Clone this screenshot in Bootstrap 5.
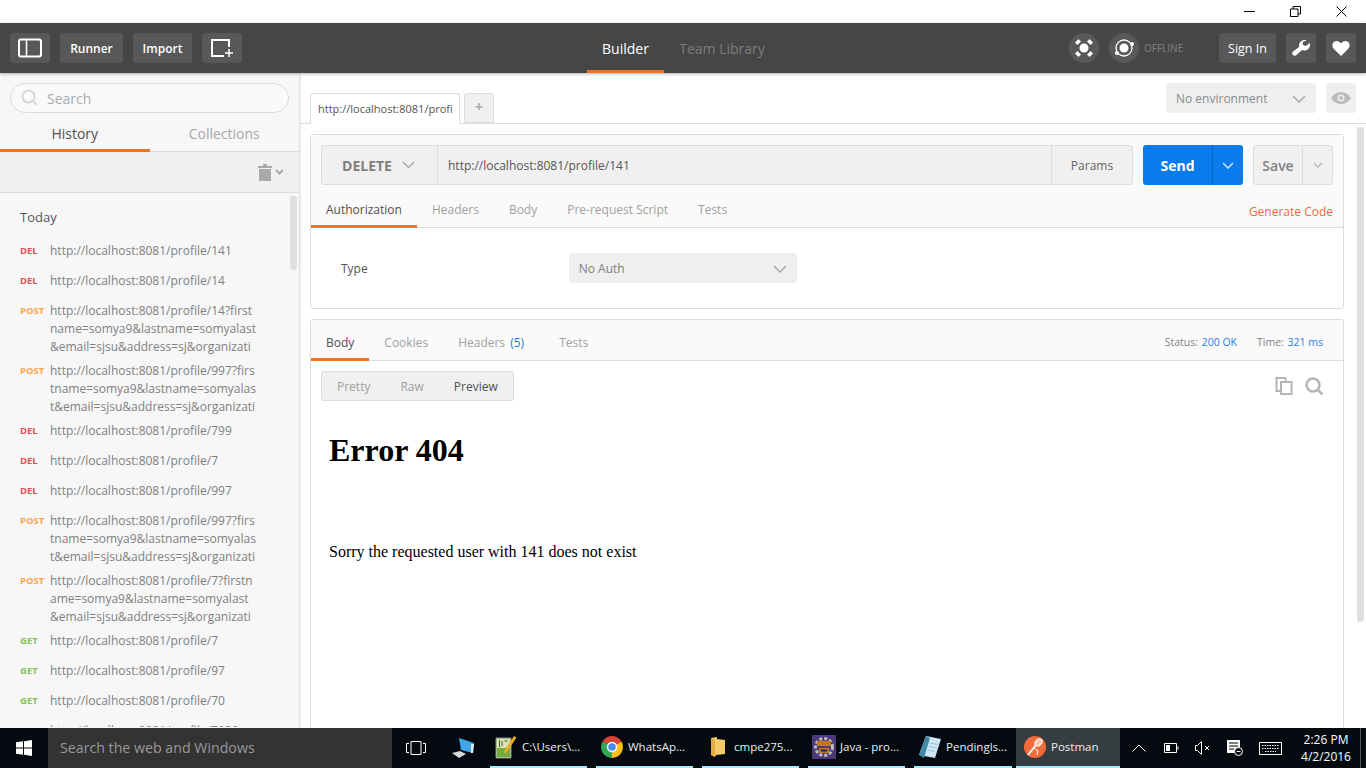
<!DOCTYPE html>
<html lang="en">

<head>
    <meta charset="UTF-8">
    <meta name="viewport" content="width=device-width, initial-scale=1.0">
    <title>Postman</title>
    <link href="https://cdn.jsdelivr.net/npm/bootstrap@5.3.2/dist/css/bootstrap.min.css" rel="stylesheet">
    <style>
        html, body { height: 100%; overflow: hidden; }
        body { font-family: "Open Sans", sans-serif; font-size: 12px; color: #555; background: #fff; }
        .app-shell { height: 768px; width: 1366px; overflow: hidden; }

        .title-strip { height: 23px; background: #fff; padding-right: 2px; }
        .win-btn { width: 46px; height: 23px; display: flex; align-items: center; justify-content: center; }

        .top-bar { height: 50px; background: #464646; padding: 10px; position: relative; z-index: 5; box-shadow: 0 1px 3px rgba(0,0,0,.3); }
        .top-btn { height: 30px; background: #585858; border-radius: 3px; color: #fff; font-weight: 600; font-size: 12px; display: flex; align-items: center; justify-content: center; }
        .top-txt { padding-top: 2px; }
        .btn-sq-lg { width: 40px; }
        .btn-sq { width: 30px; margin-left: 10px; }
        .btn-runner { width: 63px; }
        .btn-import { width: 59px; }
        .btn-sign { width: 57px; font-weight: 400; font-size: 12.5px; }
        .top-left { width: 560px; gap: 10px; }
        .top-center { margin-left: 17px; }
        .top-tab { width: 77px; height: 50px; margin-top: -10px; margin-bottom: -10px; padding-top: 3px; display: flex; align-items: center; justify-content: center; font-size: 14px; color: #fff; border-bottom: 3px solid transparent; }
        .top-tab.on { border-bottom-color: #f47023; }
        .top-tab.off { color: #7c7c7c; width: 116px; }
        .top-right { margin-left: auto; }
        .round-btn { width: 30px; height: 30px; border-radius: 50%; background: #585858; display: flex; align-items: center; justify-content: center; }
        .round-btn + .round-btn { margin-left: 10px; }
        .offline-txt { font-size: 10px; color: #808080; margin: 0 34px 0 5px; width: 41px; white-space: nowrap; }

        .body-row { height: 655px; overflow: hidden; }
        .side-col { width: 300px; flex: none; background: #f7f7f7; border-right: 1px solid #e0e0e0; box-shadow: 1px 0 2px rgba(0,0,0,.08); }
        .search-wrap { height: 56px; padding: 10px 10px 0 10px; }
        .search-pill { height: 30px; border: 1px solid #dcdcdc; border-radius: 15px; background: #fafafa; padding-left: 10px; gap: 8px; font-size: 14px; color: #aaa; }
        .side-tabs { border-bottom: 1px solid #dcdcdc; margin-top: -4px; height: 27px; }
        .side-tab { width: 150px; text-align: center; font-size: 14px; color: #a8a8a8; height: 27px; line-height: 18px; }
        .side-tab.on { color: #505050; border-bottom: 3px solid #f47023; }
        .trash-row { height: 41px; background: #f0f0f0; border-bottom: 1px solid #dcdcdc; padding-right: 15px; gap: 3px; }
        .hist-scroll { height: 534px; overflow: hidden; position: relative; padding: 15px 0 0 20px; }
        .hist-scroll::after { content: ""; position: absolute; right: 2px; top: 3px; width: 7px; height: 74px; background: #e0e0e0; border-radius: 3px; }
        .today-lbl { font-size: 13px; color: #555; height: 18px; line-height: 18px; margin-bottom: 16px; }
        .hist-row { display: flex; min-height: 24px; margin-bottom: 6px; }
        .hist-verb { width: 30px; flex: none; font-size: 9.5px; font-weight: 700; line-height: 18px; }
        .v-del { color: #e0505a; }
        .v-post { color: #f7a64a; }
        .v-get { color: #86c15c; }
        .hist-url { width: 210px; font-size: 12px; line-height: 18px; color: #808080; white-space: nowrap; }

        .main-col { width: 1066px; position: relative; }
        .tab-strip { height: 51px; border-bottom: 1px solid #dcdcdc; padding: 20px 0 0 10px; position: relative; }
        .req-tab { width: 150px; height: 31px; background: #fff; border: 1px solid #dcdcdc; border-bottom: 0; border-radius: 3px 3px 0 0; font-size: 11px; color: #555; padding: 7px 0 0 7px; overflow: hidden; white-space: nowrap; margin-bottom: -1px; position: relative; }
        .add-tab { width: 30px; height: 30px; background: #f0f0f0; border: 1px solid #dcdcdc; border-radius: 3px 3px 0 0; margin-left: 4px; color: #aaa; font-size: 14px; text-align: center; line-height: 26px; font-weight: 700; }
        .env-box { position: absolute; left: 866px; top: 10px; width: 150px; height: 30px; background: #efefef; border-radius: 3px; font-size: 12px; color: #8a8a8a; padding: 2px 10px 0; }
        .eye-box { position: absolute; left: 1026px; top: 10px; width: 30px; height: 30px; background: #efefef; border-radius: 3px; }

        .panel-box { width: 1034px; margin-left: 10px; border: 1px solid #dcdcdc; border-radius: 3px; background: #fff; }
        .req-panel { height: 175px; margin-top: 10px; }
        .url-row { padding: 10px 10px 0; gap: 10px; height: 50px; background: #fafafa; }
        .url-group { width: 812px; height: 40px; background: #f0f0f0; border: 1px solid #dcdcdc; border-radius: 3px; }
        .verb-box { width: 116px; border-right: 1px solid #dcdcdc; font-size: 14px; font-weight: 700; color: #808080; gap: 10px; padding-right: 2px; }
        .url-box { flex: 1; padding: 2px 0 0 10px; font-size: 12px; color: #555; }
        .params-box { width: 81px; border-left: 1px solid #dcdcdc; justify-content: center; color: #666; font-size: 12px; padding-top: 2px; }
        .send-btn { width: 100px; height: 40px; background: #097bed; border-radius: 3px; color: #fff; font-weight: 700; font-size: 14px; }
        .send-main { width: 70px; border-right: 1px solid #0a65c0; height: 100%; }
        .save-btn { width: 80px; height: 40px; background: #f0f0f0; border: 1px solid #dcdcdc; border-radius: 3px; color: #808080; font-weight: 600; font-size: 14px; }
        .save-main { width: 49px; border-right: 1px solid #dcdcdc; height: 100%; }
        .sub-tabs { height: 43px; background: #fafafa; border-bottom: 1px solid #dcdcdc; position: relative; }
        .sub-tab { height: 33px; padding: 0 15px; font-size: 12px; color: #a0a0a0; line-height: 30px; margin-top: 10px; }
        .sub-tab.on { color: #505050; border-bottom: 3px solid #f47023; }
        .gen-code { position: absolute; right: 10px; top: 19px; color: #f26b3a; font-size: 12px; line-height: 16px; }
        .auth-row { height: 80px; padding: 2px 0 0 30px; }
        .auth-sel { width: 228px; height: 30px; background: #efefef; border-radius: 3px; margin: -2px 0 0 201px; padding: 2px 10px 0 10px; color: #808080; }
        .resp-panel { margin-top: 10px; height: 420px; border-bottom: 0; }
        .resp-tabs { height: 41px; background: #fafafa; border-bottom: 1px solid #dcdcdc; position: relative; }
        .resp-tabs .sub-tab { margin-top: 8px; }
        .tab-count { margin-left: 2px; }
        .tab-wide { padding-right: 20px; }
        .resp-stats { position: absolute; right: 20px; top: 14px; font-size: 10.5px; line-height: 16px; color: #808080; gap: 20px; }
        .blue-val { color: #2a7ae2; }
        .stat-val { margin-left: 1px; }
        .view-row { padding: 10px 10px 0; height: 40px; }
        .view-group { width: 193px; height: 30px; background: #f0f0f0; border: 1px solid #dcdcdc; border-radius: 3px; font-size: 12px; color: #a0a0a0; padding: 2px 0 0 15px; gap: 30px; }
        .view-on { color: #505050; }
        .view-tools { gap: 12px; padding: 6px 10px 0 0; height: 24px; }
        .err-doc { padding: 0 18px; font-family: "Liberation Serif", serif; color: #000; }
        .err-doc h1 { font-family: "Liberation Serif", serif; font-weight: 700; font-size: 32px; line-height: 37px; margin: 31px 0 0; }
        .err-doc p { font-size: 16px; line-height: 18px; margin: 74px 0 0; }
        .main-scroll { position: absolute; right: 2px; top: 54px; width: 7px; height: 495px; background: #e0e0e0; border-radius: 3px; }

        .task-bar { height: 40px; background: #040a0f; color: #fff; position: relative; z-index: 5; }
        .start-btn { width: 48px; flex: none; }
        .task-search { width: 344px; flex: none; background: #333; color: #999; font-size: 14.2px; padding-left: 12px; }
        .view-slot { width: 48px; flex: none; }
        .net-slot { width: 46px; flex: none; margin-right: 4px; }
        .task-item { height: 40px; width: 97px; flex: none; gap: 4px; padding-left: 4px; font-size: 11.5px; color: #eee; margin-right: 9px; border-bottom: 2px solid #a6ebfb; white-space: nowrap; overflow: hidden; }
        .task-item.wide-tile { width: 98px; margin-right: 4px; }
        .task-item.on { background: #363d40; width: 104px; padding-left: 7px; margin-right: 2px; }
        .ico-slot { width: 24px; flex: none; display: flex; justify-content: center; }
        .tray-34 { width: 34px; flex: none; }
        .tray-30 { width: 30px; flex: none; }
        .tray-32 { width: 32px; flex: none; }
        .tray-36 { width: 36px; flex: none; }
        .clock-box { font-size: 12px; line-height: 17px; text-align: center; width: 60px; margin-left: 8px; flex: none; white-space: nowrap; }
        .desk-line { width: 1px; height: 40px; background: #555; margin-left: 4px; }
    </style>
</head>

<body>
    <div class="app-shell d-flex flex-column">
        <!-- window title -->
        <div class="title-strip d-flex justify-content-end">
            <div class="win-btn"><svg width="11" height="11" viewBox="0 0 11 11"><path d="M0 5.500h11" stroke="#000"/></svg></div>
            <div class="win-btn"><svg width="11" height="11" viewBox="0 0 11 11" fill="none" stroke="#000"><path d="M.5 3h7.500v7.500h-7.500zM3 3v-2.500h7.500v7.500h-2.500"/></svg></div>
            <div class="win-btn"><svg width="11" height="11" viewBox="0 0 11 11" stroke="#000"><path d="M.5.5l10 10M10.500.5l-10 10"/></svg></div>
        </div>

        <!-- top bar -->
        <div class="top-bar d-flex align-items-center">
            <div class="top-left d-flex">
                <div class="top-btn btn-sq-lg"><svg width="24" height="20" viewBox="0 0 24 20" fill="none" stroke="#fff" stroke-width="2"><rect x="1" y="1.500" width="22" height="17" rx="2"/><path d="M8.500 1.500v17" stroke-width="1.500"/></svg></div>
                <div class="top-btn top-txt btn-runner">Runner</div>
                <div class="top-btn top-txt btn-import">Import</div>
                <div class="top-btn btn-sq-lg"><svg width="24" height="20" viewBox="0 0 24 20" fill="none" stroke="#fff" stroke-width="2"><path d="M19 9V2H2v16h12"/><path d="M15 15h8M19 11v8" stroke-width="1.500"/></svg></div>
            </div>
            <div class="top-center d-flex">
                <div class="top-tab on">Builder</div>
                <div class="top-tab off">Team Library</div>
            </div>
            <div class="top-right d-flex align-items-center">
                <div class="round-btn"><svg width="20" height="20" viewBox="0 0 20 20" fill="#fff"><circle cx="10" cy="10" r="4.500"/><path d="M1 4.500L4.500 1 7 3.500 3.500 7zM13 3.500L15.500 1 19 4.500 16.500 7zM1 15.500L3.500 13 7 16.500 4.500 19zM13 16.500l3.500-3.500 2.500 2.500-3.500 3.500z"/></svg></div>
                <div class="round-btn"><svg width="24" height="24" viewBox="0 0 24 24"><circle cx="12" cy="12" r="8" fill="none" stroke="#fff" stroke-width="1.300"/><circle cx="12" cy="12" r="4.500" fill="#fff"/><circle cx="20" cy="8" r="2" fill="#fff"/><circle cx="5" cy="17" r="2" fill="#fff"/></svg></div>
                <div class="offline-txt">OFFLINE</div>
                <div class="top-btn top-txt btn-sign">Sign In</div>
                <div class="top-btn btn-sq"><svg width="18" height="16" viewBox="0 0 18 16" fill="#fff"><path d="M12.500 0C9.500 0 7 2.500 7 5.500c0 .5 0 1 .2 1.400L1 11.500C-.2 12.500 0 14 1 15s2.500 1 3.500 0l5.500-5c.8.3 1.500.5 2.500.5 3 0 5.500-2.500 5.500-5.500 0-.8-.2-1.500-.4-2l-3.600 3-3-1-.5-3L14.500.4C13.900.1 13.200 0 12.500 0z"/></svg></div>
                <div class="top-btn btn-sq"><svg width="18" height="16" viewBox="0 0 18 16" fill="#fff"><path d="M9 16L1.500 8.500C-1 5.500 1 1 4.500 1 6.500 1 8 2 9 3.500 10 2 11.500 1 13.500 1 17 1 19 5.500 16.500 8.500z"/></svg></div>
            </div>
        </div>

        <div class="body-row d-flex flex-grow-1">
            <!-- sidebar -->
            <div class="side-col">
                <div class="search-wrap">
                    <div class="search-pill d-flex align-items-center">
                        <svg width="18" height="18" viewBox="0 0 18 18" fill="none" stroke="#d8d8d8" stroke-width="2"><circle cx="7.500" cy="7.500" r="6"/><path d="M12 12l4 4"/></svg>
                        <span>Search</span>
                    </div>
                </div>
                <div class="side-tabs d-flex">
                    <div class="side-tab on">History</div>
                    <div class="side-tab">Collections</div>
                </div>
                <div class="trash-row d-flex align-items-center justify-content-end">
                    <svg width="14" height="17" viewBox="0 0 14 17" fill="#aaa"><path d="M0 2h5V0h4v2h5v2H0zM1 5h12v12H1z"/></svg>
                    <svg width="9" height="6" viewBox="0 0 9 6" fill="none" stroke="#aaa" stroke-width="2"><path d="M1 1l3.500 3.500L8 1"/></svg>
                </div>
                <div class="hist-scroll">
                    <div class="today-lbl">Today</div>
                    <div class="hist-row"><div class="hist-verb v-del">DEL</div><div class="hist-url">http://localhost:8081/profile/141</div></div>
                    <div class="hist-row"><div class="hist-verb v-del">DEL</div><div class="hist-url">http://localhost:8081/profile/14</div></div>
                    <div class="hist-row"><div class="hist-verb v-post">POST</div><div class="hist-url">http://localhost:8081/profile/14?first<br>name=somya9&amp;lastname=somyalast<br>&amp;email=sjsu&amp;address=sj&amp;organizati</div></div>
                    <div class="hist-row"><div class="hist-verb v-post">POST</div><div class="hist-url">http://localhost:8081/profile/997?firs<br>tname=somya9&amp;lastname=somyalas<br>t&amp;email=sjsu&amp;address=sj&amp;organizati</div></div>
                    <div class="hist-row"><div class="hist-verb v-del">DEL</div><div class="hist-url">http://localhost:8081/profile/799</div></div>
                    <div class="hist-row"><div class="hist-verb v-del">DEL</div><div class="hist-url">http://localhost:8081/profile/7</div></div>
                    <div class="hist-row"><div class="hist-verb v-del">DEL</div><div class="hist-url">http://localhost:8081/profile/997</div></div>
                    <div class="hist-row"><div class="hist-verb v-post">POST</div><div class="hist-url">http://localhost:8081/profile/997?firs<br>tname=somya9&amp;lastname=somyalas<br>t&amp;email=sjsu&amp;address=sj&amp;organizati</div></div>
                    <div class="hist-row"><div class="hist-verb v-post">POST</div><div class="hist-url">http://localhost:8081/profile/7?firstn<br>ame=somya9&amp;lastname=somyalast<br>&amp;email=sjsu&amp;address=sj&amp;organizati</div></div>
                    <div class="hist-row"><div class="hist-verb v-get">GET</div><div class="hist-url">http://localhost:8081/profile/7</div></div>
                    <div class="hist-row"><div class="hist-verb v-get">GET</div><div class="hist-url">http://localhost:8081/profile/97</div></div>
                    <div class="hist-row"><div class="hist-verb v-get">GET</div><div class="hist-url">http://localhost:8081/profile/70</div></div>
                    <div class="hist-row"><div class="hist-verb v-post">POST</div><div class="hist-url">http://localhost:8081/profile/7039</div></div>
                </div>
            </div>

            <!-- main -->
            <div class="main-col">
                <div class="tab-strip d-flex">
                    <div class="req-tab">http://localhost:8081/profi</div>
                    <div class="add-tab">+</div>
                    <div class="env-box d-flex align-items-center justify-content-between">
                        <span>No environment</span>
                        <svg width="14" height="8" viewBox="0 0 14 8" fill="none" stroke="#aaa" stroke-width="1.500"><path d="M1 1l6 6 6-6"/></svg>
                    </div>
                    <div class="eye-box d-flex align-items-center justify-content-center">
                        <svg width="20" height="12" viewBox="0 0 20 12" fill="#bbb"><path d="M0 6c5-8 15-8 20 0-5 8-15 8-20 0z"/><circle cx="10" cy="6" r="3.500" fill="#efefef"/><circle cx="10" cy="6" r="2"/></svg>
                    </div>
                </div>

                <div class="panel-box req-panel">
                    <div class="url-row d-flex">
                        <div class="url-group d-flex">
                            <div class="verb-box d-flex align-items-center justify-content-center">DELETE
                                <svg width="13" height="8" viewBox="0 0 13 8" fill="none" stroke="#aaa" stroke-width="1.500"><path d="M1 1l5.500 5.500L12 1"/></svg>
                            </div>
                            <div class="url-box d-flex align-items-center">http://localhost:8081/profile/141</div>
                            <div class="params-box d-flex align-items-center">Params</div>
                        </div>
                        <div class="send-btn d-flex">
                            <div class="send-main d-flex align-items-center justify-content-center">Send</div>
                            <div class="d-flex flex-grow-1 align-items-center justify-content-center"><svg width="12" height="7" viewBox="0 0 12 7" fill="none" stroke="#cfe4fb" stroke-width="1.500"><path d="M1 1l5 5 5-5"/></svg></div>
                        </div>
                        <div class="save-btn d-flex">
                            <div class="save-main d-flex align-items-center justify-content-center">Save</div>
                            <div class="d-flex flex-grow-1 align-items-center justify-content-center"><svg width="10" height="6" viewBox="0 0 10 6" fill="none" stroke="#b5b5b5" stroke-width="1.300"><path d="M1 1l4 4 4-4"/></svg></div>
                        </div>
                    </div>
                    <div class="sub-tabs d-flex">
                        <div class="sub-tab on">Authorization</div>
                        <div class="sub-tab">Headers</div>
                        <div class="sub-tab">Body</div>
                        <div class="sub-tab">Pre-request Script</div>
                        <div class="sub-tab">Tests</div>
                        <div class="gen-code">Generate Code</div>
                    </div>
                    <div class="auth-row d-flex align-items-center">
                        <span>Type</span>
                        <div class="auth-sel d-flex align-items-center justify-content-between">
                            <span>No Auth</span>
                            <svg width="14" height="8" viewBox="0 0 14 8" fill="none" stroke="#aaa" stroke-width="1.500"><path d="M1 1l6 6 6-6"/></svg>
                        </div>
                    </div>
                </div>

                <div class="panel-box resp-panel">
                    <div class="resp-tabs d-flex">
                        <div class="sub-tab on">Body</div>
                        <div class="sub-tab">Cookies</div>
                        <div class="sub-tab tab-wide">Headers <span class="blue-val tab-count">(5)</span></div>
                        <div class="sub-tab">Tests</div>
                        <div class="resp-stats d-flex">
                            <span>Status: <span class="blue-val stat-val">200 OK</span></span>
                            <span>Time: <span class="blue-val stat-val">321 ms</span></span>
                        </div>
                    </div>
                    <div class="view-row d-flex justify-content-between">
                        <div class="view-group d-flex align-items-center">
                            <span>Pretty</span>
                            <span>Raw</span>
                            <span class="view-on">Preview</span>
                        </div>
                        <div class="view-tools d-flex">
                            <svg width="18" height="18" viewBox="0 0 18 18" fill="none" stroke="#b5b5b5" stroke-width="2"><path d="M6 5h10.500v12H6zM6 14H1.500V1h9v4"/></svg>
                            <svg width="18" height="18" viewBox="0 0 18 18" fill="none" stroke="#b5b5b5" stroke-width="2.500"><circle cx="8" cy="8" r="6.500"/><path d="M12.500 12.500l5 5"/></svg>
                        </div>
                    </div>
                    <div class="err-doc">
                        <h1>Error 404</h1>
                        <p>Sorry the requested user with 141 does not exist</p>
                    </div>
                </div>
                <div class="main-scroll"></div>
            </div>
        </div>

        <!-- windows taskbar -->
        <div class="task-bar d-flex">
            <div class="start-btn d-flex align-items-center justify-content-center">
                <svg width="16" height="16" viewBox="0 0 16 16" fill="#fff"><path d="M0 2.300l7-1v6.200H0zM8 1.200L16 0v7.500H8zM0 8.500h7v6.200l-7-1zM8 8.500h8V16l-8-1.200z"/></svg>
            </div>
            <div class="task-search d-flex align-items-center">Search the web and Windows</div>
            <div class="view-slot d-flex align-items-center justify-content-center"><svg width="20" height="14" viewBox="0 0 20 14" fill="none" stroke="#fff"><path d="M5 .5h10v13H5zM3 2.500H.5v9H3M17 2.500h2.500v9H17"/></svg></div>
            <div class="net-slot d-flex align-items-center justify-content-center"><svg width="22" height="20" viewBox="0 0 22 20"><path d="M7 0l15 5-1 10-12-3z" fill="#3fa4e8"/><path d="M19 6v9l2 0 1-9z" fill="#dfe8ef"/><path d="M0 15l8-2 6 3-7 4z" fill="#d8d8d8"/></svg></div>
            <div class="task-item d-flex align-items-center">
                <span class="ico-slot"><svg width="22" height="24" viewBox="0 0 22 24"><path d="M1 3h15v20H1z" fill="#d7e6a8" stroke="#888"/><path d="M2 13h13v9H2z" fill="#6fae3c"/><path d="M4.500 5v7M7 6v5M9.500 6h3" stroke="#555"/><path d="M9 16L19 1l2.500 1.500L12 17l-3 1.500z" fill="#e9a92a"/></svg></span>
                <span>C:\Users\...</span>
            </div>
            <div class="task-item d-flex align-items-center">
                <span class="ico-slot"><svg width="22" height="22" viewBox="0 0 22 22"><path d="M11 11L1.500 5.500A11 11 0 0 1 20.500 5.500z" fill="#d8443a"/><path d="M11 11L1.500 5.500A11 11 0 0 0 11 22z" fill="#34a853"/><path d="M11 11L20.500 5.500A11 11 0 0 1 11 22z" fill="#fbc116"/><circle cx="11" cy="11" r="4.500" fill="#4a8bf0" stroke="#fff" stroke-width="1.500"/></svg></span>
                <span>WhatsAp...</span>
            </div>
            <div class="task-item d-flex align-items-center">
                <span class="ico-slot"><svg width="14" height="20" viewBox="0 0 14 20"><path d="M0 1l6-1v2l8 1v14l-9 1-1 2-4-2z" fill="#f4cd6a"/><path d="M0 1l4 2v17l-4-2z" fill="#e0ae40"/></svg></span>
                <span>cmpe275...</span>
            </div>
            <div class="task-item d-flex align-items-center">
                <span class="ico-slot"><svg width="24" height="24" viewBox="0 0 24 24"><rect width="24" height="24" rx="1" fill="#4b3a78"/><circle cx="12" cy="12" r="8.500" fill="none" stroke="#bdbdbd" stroke-width="3" stroke-dasharray="3 2"/><rect x="5" y="6" width="14" height="5" fill="#c9741f"/><rect x="7" y="13" width="10" height="5" fill="#c9741f"/><rect x="9" y="14.500" width="6" height="2" fill="#2b1f4a"/></svg></span>
                <span>Java - pro...</span>
            </div>
            <div class="task-item wide-tile d-flex align-items-center">
                <span class="ico-slot"><svg width="24" height="24" viewBox="0 0 24 24"><path d="M8 1l15 3-6 19L1 20z" fill="#cfe6f5"/><path d="M8 1L1 20l5 3 6-20z" fill="#3f8aa8"/><path d="M12 8l8 1.500M11 11.500l8 1.500M10 15l7 1.500" stroke="#9cc3dc"/></svg></span>
                <span>Pendingls...</span>
            </div>
            <div class="task-item on d-flex align-items-center">
                <span class="ico-slot"><svg width="22" height="22" viewBox="0 0 22 22"><circle cx="11" cy="11" r="11" fill="#f26b3a"/><path d="M4 19L12 9" stroke="#fff" stroke-width="1.800"/><ellipse cx="14.500" cy="6.500" rx="4" ry="3" transform="rotate(-45 14.500 6.500)" fill="#f8c9b0" stroke="#fff"/><path d="M10 12l4 3-1 4" fill="none" stroke="#fff"/></svg></span>
                <span>Postman</span>
            </div>
            <div class="d-flex align-items-center">
                <div class="tray-34 d-flex align-items-center justify-content-center"><svg width="14" height="8" viewBox="0 0 14 8" fill="none" stroke="#fff"><path d="M.5 7.500l6.500-6.500 6.500 6.500"/></svg></div>
                <div class="tray-30 d-flex align-items-center justify-content-center"><svg width="15" height="10" viewBox="0 0 15 10" fill="none" stroke="#fff"><path d="M.5.5h12v9H.5zM14 3.500v3"/><path d="M2 2h4v6H2z" fill="#fff" stroke="none"/></svg></div>
                <div class="tray-32 d-flex align-items-center justify-content-center"><svg width="15" height="14" viewBox="0 0 15 14" fill="none" stroke="#fff"><path d="M.5 4.500h2l4-4v13l-4-4h-2zM10 5l4 4M14 5l-4 4"/></svg></div>
                <div class="tray-34 d-flex align-items-center justify-content-center"><svg width="16" height="16" viewBox="0 0 16 16"><path d="M0 0h13v13H0z" fill="#fff"/><path d="M2 3h9M2 6h9M2 9h5" stroke="#000"/><circle cx="11.500" cy="11.500" r="4" fill="#040a0f" stroke="#fff"/><path d="M9.500 11.500h4" stroke="#fff"/></svg></div>
                <div class="tray-36 d-flex align-items-center justify-content-center"><svg width="23" height="13" viewBox="0 0 23 13" fill="none" stroke="#fff"><path d="M.5.5h22v12H.5z"/><path d="M3 3.500h17M3 6.500h17M6 9.500h11" stroke-dasharray="1.500 1"/></svg></div>
                <div class="clock-box">2:26 PM<br>4/2/2016</div>
                <div class="desk-line"></div>
            </div>
        </div>
    </div>

    <script src="https://cdn.jsdelivr.net/npm/bootstrap@5.3.2/dist/js/bootstrap.bundle.min.js"></script>
</body>

</html>
